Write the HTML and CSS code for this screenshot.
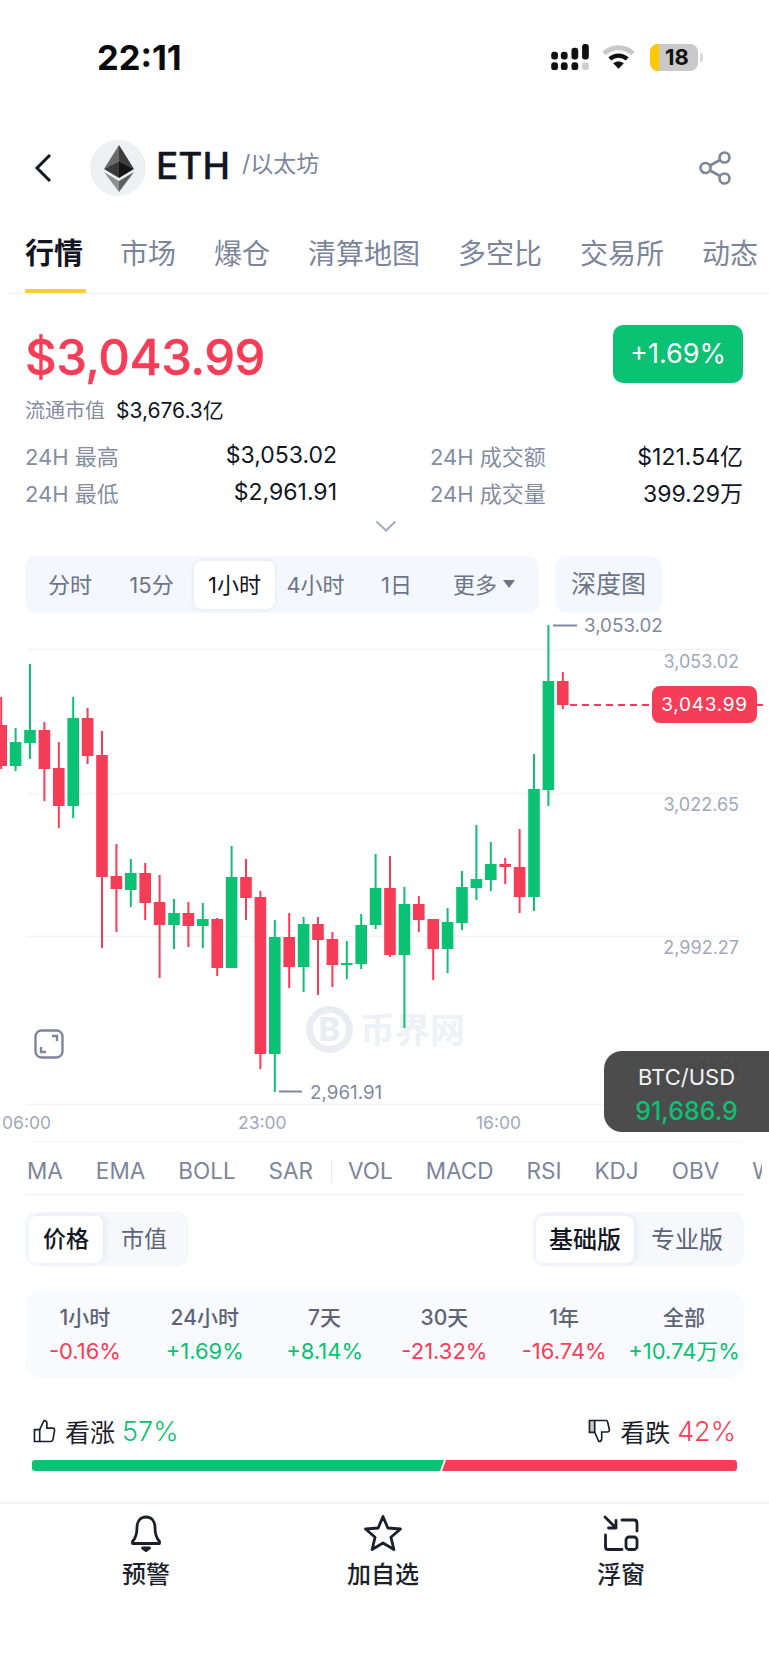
FILE: index.html
```html
<!DOCTYPE html>
<html lang="zh">
<head>
    <meta charset="UTF-8">
    <title>ETH 行情</title>
    <link rel="stylesheet" href="styles.css">
</head>
<body>
    <div class="status">
        <span class="clock">22:11</span>
        <div class="status-icons">
            <svg class="signal" viewBox="0 0 40 28">
                <rect x="0" y="8" width="7" height="8" rx="3"/>
                <rect x="10" y="8" width="7" height="8" rx="3"/>
                <rect x="21" y="4" width="7" height="12" rx="3"/>
                <rect x="32" y="0" width="7" height="16" rx="3"/>
                <rect x="0" y="19" width="7" height="8" rx="3"/>
                <rect x="10" y="19" width="7" height="8" rx="3"/>
                <rect x="21" y="19" width="7" height="8" rx="3"/>
                <rect class="off" x="32" y="19" width="7" height="8" rx="3"/>
            </svg>
            <svg class="wifi" viewBox="0 0 34 24">
                <path d="M2 8.5C10.500 .5 23.500 .5 32 8.500" fill="none" stroke="#c9c9c9" stroke-width="5"/>
                <path d="M8 14c5.400-4.600 12.600-4.600 18 0" fill="none" stroke="#111" stroke-width="4.500"/>
                <path d="M11.500 18.500c3.400-2.400 7.600-2.400 11 0L17 24Z" fill="#111"/>
            </svg>
            <div class="battery"><span class="battery-low"></span><span class="battery-num">18</span></div>
            <span class="battery-nub"></span>
        </div>
    </div>

    <div class="head">
        <svg class="back" viewBox="0 0 18 30"><path d="M16 2 3 15l13 13" fill="none" stroke="#12161f" stroke-width="3"/></svg>
        <svg class="logo" viewBox="0 0 56 56">
            <circle cx="28" cy="28" r="28" fill="#eef0f1"/>
            <polygon points="29,5 14,29 29,21" fill="#6a6a6a"/>
            <polygon points="29,5 44,29 29,21" fill="#3d3d3d"/>
            <polygon points="14,29 29,21 29,38" fill="#3a3a3a"/>
            <polygon points="44,29 29,21 29,38" fill="#151515"/>
            <polygon points="14,32 29,41 29,52" fill="#8f8f8f"/>
            <polygon points="44,32 29,41 29,52" fill="#5f5f5f"/>
        </svg>
        <span class="coin">ETH</span>
        <span class="coin-name">/以太坊</span>
        <svg class="share" viewBox="0 0 32 34" fill="none" stroke="#7d8699" stroke-width="2.600">
            <circle cx="25.500" cy="6.500" r="5"/>
            <circle cx="6.500" cy="17" r="5"/>
            <circle cx="25.500" cy="27.500" r="5"/>
            <path d="m11 14.500 10-5.500M11 19.500l10 5.500"/>
        </svg>
    </div>

    <div class="tabs">
        <a class="tab active">行情</a>
        <a class="tab">市场</a>
        <a class="tab">爆仓</a>
        <a class="tab">清算地图</a>
        <a class="tab">多空比</a>
        <a class="tab">交易所</a>
        <a class="tab">动态</a>
    </div>

    <div class="summary">
        <div class="price-row">
            <span class="price">$3,043.99</span>
            <span class="change">+1.69%</span>
        </div>
        <div class="cap"><span class="cap-label">流通市值</span><span class="cap-value">$3,676.3亿</span></div>
        <div class="stats">
            <div class="stat"><span>24H 最高</span><b>$3,053.02</b></div>
            <div class="stat"><span>24H 成交额</span><b>$121.54亿</b></div>
            <div class="stat"><span>24H 最低</span><b>$2,961.91</b></div>
            <div class="stat"><span>24H 成交量</span><b>399.29万</b></div>
        </div>
        <svg class="more" viewBox="0 0 22 12"><path d="m1.500 1.500 9.500 9 9.500-9" fill="none" stroke="#a5adbc" stroke-width="2"/></svg>
        <div class="toolbar">
            <div class="periods">
                <a class="period p1">分时</a>
                <a class="period p2">15分</a>
                <a class="period p3 on">1小时</a>
                <a class="period p4">4小时</a>
                <a class="period p5">1日</a>
                <a class="period p6">更多<i class="caret"></i></a>
            </div>
            <a class="depth">深度图</a>
        </div>
    </div>

    <div class="chart">
        <svg id="kline" class="kline" viewBox="0 613 769 530">
            <g class="grid">
                <line x1="27" x2="739" y1="649.500" y2="649.500"/>
                <line x1="27" x2="739" y1="793.500" y2="793.500"/>
                <line x1="27" x2="739" y1="936.500" y2="936.500"/>
                <line x1="27" x2="739" y1="1104.500" y2="1104.500"/>
                <line x1="27" x2="742" y1="1142" y2="1142"/>
            </g>
            <g class="mark">
                <circle cx="329.500" cy="1029.500" r="20" fill="none" stroke="#e9edf2" stroke-width="7"/>
                <text class="mark-b" x="329.500" y="1041">B</text>
                <text class="mark-text" x="360" y="1043">币界网</text>
            </g>
            <g class="axis">
                <text x="739" y="668">3,053.02</text>
                <text x="739" y="811">3,022.65</text>
                <text x="739" y="954">2,992.27</text>
                <text x="739" y="1076">2,961.91</text>
            </g>
            <g class="times">
                <text x="2" y="1129">06:00</text>
                <text x="238" y="1129">23:00</text>
                <text x="476" y="1129">16:00</text>
            </g>
            <g class="extreme">
                <line x1="553" x2="577" y1="625.500" y2="625.500"/>
                <text x="584" y="632">3,053.02</text>
                <line x1="279" x2="302" y1="1091.500" y2="1091.500"/>
                <text x="310" y="1099">2,961.91</text>
            </g>
            <line class="last" x1="570" x2="652" y1="705" y2="705"/>
            <line class="last" x1="757" x2="763" y1="705" y2="705"/>
        </svg>
        <span class="last-tag">3,043.99</span>
        <svg class="expand" viewBox="0 0 30 30" fill="none" stroke="#7c859c" stroke-width="2.400">
            <rect x="1.500" y="1.500" width="27" height="27" rx="6"/>
            <path d="M18 7h5v5M7 18v5h5"/>
        </svg>
        <div class="float-quote">
            <span class="float-pair">BTC/USD</span>
            <span class="float-num">91,686.9</span>
        </div>
    </div>

    <div class="indicators">
        <a>MA</a><a>EMA</a><a>BOLL</a><a class="sep">SAR</a><a>VOL</a><a>MACD</a><a>RSI</a><a>KDJ</a><a>OBV</a><a>WR</a>
    </div>
    <div class="rule"></div>

    <div class="switches">
        <div class="switch">
            <a class="sw sw-price on">价格</a>
            <a class="sw sw-cap">市值</a>
        </div>
        <div class="switch">
            <a class="sw sw-basic on">基础版</a>
            <a class="sw sw-pro">专业版</a>
        </div>
    </div>

    <div class="returns">
        <div class="ret"><span>1小时</span><b class="down">-0.16%</b></div>
        <div class="ret"><span>24小时</span><b class="up">+1.69%</b></div>
        <div class="ret"><span>7天</span><b class="up">+8.14%</b></div>
        <div class="ret"><span>30天</span><b class="down">-21.32%</b></div>
        <div class="ret"><span>1年</span><b class="down">-16.74%</b></div>
        <div class="ret"><span>全部</span><b class="up">+10.74万%</b></div>
    </div>

    <div class="vote">
        <div class="vote-side">
            <svg class="thumb" viewBox="0 0 24 24" fill="none" stroke="#1c1f2b" stroke-width="1.700">
                <path d="M7 10.500V23H1.500V10.500Z"/>
                <path d="M7 10.500 11.500 1c1.800 0 3 1.200 3 3v5h6c1.300 0 2.200 1 2 2.300l-1.700 9.800c-.2 1.100-1 1.900-2.100 1.900H7"/>
            </svg>
            <span class="vote-label">看涨</span><span class="vote-num up">57%</span>
        </div>
        <div class="vote-side">
            <svg class="thumb" viewBox="0 0 24 24" fill="none" stroke="#1c1f2b" stroke-width="1.700">
                <path d="M7 13.500V1H1.500v12.500Z" fill="#1c1f2b" fill-opacity=".25"/>
                <path d="M7 1h11.500c1.100 0 1.900.8 2.100 1.900l1.700 7.800c.2 1.300-.7 2.300-2 2.300h-6v7c0 1.800-1.200 3-3 3L7 13.500"/>
            </svg>
            <span class="vote-label">看跌</span><span class="vote-num down">42%</span>
        </div>
    </div>
    <div class="vote-bar">
        <div class="bar-up"></div>
        <div class="bar-down"></div>
    </div>

    <div class="nav">
        <a class="nav-item">
            <svg class="nav-icon" viewBox="0 0 38 38" fill="none" stroke="#1c1f2b" stroke-width="2.800" stroke-linejoin="round">
                <path d="M19 3c-6 0-9 4.500-9 10.500 0 6-.8 10-4.500 14v2h27v-2c-3.700-4-4.500-8-4.500-14C28 7.500 25 3 19 3Z"/>
                <path d="M15.500 34h7L19 36.500Z" fill="#1c1f2b"/>
            </svg>
            预警
        </a>
        <a class="nav-item">
            <svg class="nav-icon" viewBox="0 0 38 38" fill="none" stroke="#1c1f2b" stroke-width="2.800" stroke-linejoin="round">
                <path d="M19 2.500 23.800 14l12.700 1-9.600 8.200 3 12.300L19 29l-10.900 6.500 3-12.300L1.500 15l12.700-1Z"/>
            </svg>
            加自选
        </a>
        <a class="nav-item">
            <svg class="nav-icon" viewBox="0 0 38 38" fill="none" stroke="#1c1f2b" stroke-width="2.800" stroke-linecap="round" stroke-linejoin="round">
                <path d="m3 3 11 11M14 6.500V14H6.500"/>
                <path d="M20 6h12c2 0 3 1 3 3v8"/>
                <path d="M3.500 21v12c0 1.500 1 2.500 2.500 2.500h14"/>
                <rect x="24" y="23" width="11" height="12.500" rx="3"/>
            </svg>
            浮窗
        </a>
    </div>

    <script src="chart.js"></script>
</body>
</html>
```

FILE: styles.css
```css
*{box-sizing:border-box;}
html,body{margin:0;padding:0;}
body{width:769px;height:1665px;overflow:hidden;background:#fff;color:#12161f;font-family:Inter,"Noto Sans CJK SC",sans-serif;}
a{display:block;}
svg{display:block;flex:none;}
.up{color:#0ac174;}
.down{color:#f63d58;}

/* status bar */
.status{display:flex;align-items:center;justify-content:space-between;height:114px;padding:0 66px 0 97px;}
.clock{font-size:34.500px;font-weight:700;color:#0a0a0a;}
.status-icons{display:flex;align-items:center;}
.signal{width:39px;height:27px;margin-right:12px;fill:#111;}
.signal .off{fill:#cfcfcf;}
.wifi{width:33px;height:24px;margin-right:15px;}
.battery{position:relative;display:flex;align-items:center;justify-content:center;width:48px;height:27px;padding-left:6px;border-radius:8px;background:#c9c9c9;overflow:hidden;}
.battery-low{position:absolute;left:0;top:0;bottom:0;width:9px;background:#ffc800;}
.battery-num{position:relative;font-size:22px;font-weight:700;color:#111;}
.battery-nub{width:3px;height:9px;margin-left:2px;border-radius:0 3px 3px 0;background:#d8d8d8;}

/* coin header */
.head{display:flex;align-items:center;height:108px;padding-left:34px;}
.back{width:18px;height:30px;margin-right:38px;}
.logo{width:56px;height:56px;margin-right:10px;margin-top:-1px;}
.coin{font-size:37px;font-weight:500;margin-right:12px;margin-top:-6px;-webkit-text-stroke:.3px #12161f;}
.coin-name{font-size:23px;color:#7c859b;margin-top:-12px;}
.share{width:32px;height:34px;margin-left:auto;margin-right:38px;}

/* tabs */
.tabs{display:flex;gap:38px;height:72px;margin-left:9px;padding-left:16px;border-bottom:1px solid #eff0f3;overflow:hidden;}
.tab{flex:none;height:71px;padding-top:13px;font-size:28px;line-height:38px;color:#7c859c;white-space:nowrap;}
.tab.active{width:61px;margin-right:-4px;font-size:29px;font-weight:700;color:#12161f;border-bottom:4px solid #ffd02b;}

/* price block */
.summary{padding:31px 25px 0;}
.price-row{display:flex;justify-content:space-between;height:58px;margin-right:1px;}
.price{font-size:49px;line-height:66px;font-weight:500;color:#f63d58;letter-spacing:-.5px;-webkit-text-stroke:.4px #f63d58;}
.change{width:130px;height:58px;border-radius:10px;background:#0ac174;color:#fff;font-size:27px;line-height:58px;text-align:center;}
.cap{display:flex;align-items:center;gap:11px;height:28px;margin-top:12px;}
.cap-label{font-size:20px;color:#858da1;}
.cap-value{font-size:21px;color:#12161f;}
.stats{display:grid;grid-template-columns:312px 313px;column-gap:93px;grid-auto-rows:37px;margin-top:13px;margin-right:-1px;}
.stat{display:flex;align-items:center;justify-content:space-between;font-size:22px;}
.stat span{color:#858da1;}
.stat b{font-size:23px;font-weight:400;color:#12161f;}
.more{width:22px;height:12px;margin:10px 0 0 350px;}
.toolbar{display:flex;gap:16px;height:57px;margin-top:24px;}
.periods{position:relative;display:flex;align-items:center;width:514px;border-radius:12px;background:#f4f7fb;font-size:22px;color:#6d7589;}
.period{flex:none;text-align:center;line-height:48px;height:48px;white-space:nowrap;}
.p1{width:90px;}
.p2{width:73px;}
.p3{width:81px;margin-left:6px;}
.p4{width:81px;}
.p5{width:81px;}
.p6{width:90px;margin-left:2px;}
.period.on{border-radius:8px;background:#fff;color:#12161f;box-shadow:0 0 4px rgba(120,135,165,.16);}
.caret{display:inline-block;width:0;height:0;margin-left:6px;vertical-align:5px;border:6px solid transparent;border-top:8px solid #6d7589;border-bottom:0;}
.depth{width:107px;border-radius:12px;background:#f4f7fb;font-size:25px;line-height:57px;text-align:center;color:#6d7589;}

/* chart canvas */
.chart{position:relative;height:529px;overflow:hidden;}
.kline{position:absolute;left:0;top:0;width:769px;height:530px;}
.grid line{stroke:#f2f4f7;stroke-width:1.500;}
.axis text{font-size:18px;fill:#a1a9bb;text-anchor:end;}
.times text{font-size:17.500px;fill:#a1a9bb;}
.extreme text{font-size:18.800px;fill:#7f889c;}
.extreme line{stroke:#7f889c;stroke-width:2;}
.last{stroke:#f63d58;stroke-width:2;stroke-dasharray:7 5;}
.mark-b{font-size:32px;font-weight:800;fill:#e9edf2;text-anchor:middle;}
.mark-text{font-size:35px;font-weight:700;fill:#eef1f5;}
.last-tag{position:absolute;left:652px;top:73px;width:105px;height:37px;border-radius:8px;background:#f63d58;color:#fff;font-size:19px;line-height:37px;letter-spacing:.7px;text-align:center;}
.expand{position:absolute;left:34px;top:416px;width:30px;height:30px;}
.float-quote{position:absolute;left:604px;top:438px;display:flex;flex-direction:column;align-items:center;width:165px;height:81px;padding-top:12px;border-radius:18px 0 0 18px;background:rgba(66,66,66,.95);}
.float-pair{font-size:22px;line-height:28px;color:#f2f2f2;}
.float-num{margin-top:4px;font-size:25px;line-height:32px;font-weight:500;color:#0ac174;}

/* indicators */
.indicators{display:flex;align-items:center;gap:33px;width:735px;height:52px;margin-left:27px;padding-top:4px;overflow:hidden;font-size:22.500px;color:#7c859c;white-space:nowrap;}
.indicators a{flex:none;}
.indicators .sep{position:relative;margin-right:2px;}
.indicators .sep::after{content:"";position:absolute;right:-19px;top:3px;bottom:1px;width:1px;background:#e8eaef;}
.rule{width:719px;height:1px;margin-left:25px;background:#eff1f4;}

/* price / version switches */
.switches{display:flex;justify-content:space-between;margin:17px 25px 0;}
.switch{display:flex;align-items:center;height:54px;padding:0 4px;border-radius:12px;background:#f6f8fc;font-size:23px;color:#5d6478;}
.sw{height:47px;line-height:47px;text-align:center;}
.sw.on{border-radius:8px;background:#fff;color:#12161f;font-weight:500;box-shadow:2px 0 6px rgba(120,135,165,.14);}
.sw-price{width:74px;}
.sw-cap{width:82px;}
.sw-basic{width:98px;font-size:24px;}
.sw-pro{width:106px;font-size:24px;}

/* returns */
.returns{display:flex;height:87px;margin:25px 25px 0;padding-top:13px;border-radius:16px;background:#f8fafd;}
.ret{display:flex;flex-direction:column;align-items:center;width:120px;white-space:nowrap;}
.ret span{font-size:21px;line-height:28px;font-weight:500;color:#5d6478;}
.ret b{margin-top:5px;font-size:22px;line-height:28px;font-weight:400;}

/* sentiment */
.vote{display:flex;justify-content:space-between;align-items:center;height:32px;margin:37px 33px 0;}
.vote-side{display:flex;align-items:center;}
.thumb{width:23px;height:24px;margin-right:9px;}
.vote-label{font-size:25px;color:#1c1f2b;margin-right:7px;}
.vote-num{font-size:27px;font-weight:300;}
.vote-bar{display:flex;gap:1px;height:11px;margin:13px 32px 0;}
.bar-up{width:412px;border-radius:3px 0 0 3px;background:#0ac174;clip-path:polygon(0 0,100% 0,calc(100% - 4px) 100%,0 100%);}
.bar-down{flex:1;margin-left:-3px;border-radius:0 3px 3px 0;background:#f63d58;clip-path:polygon(4px 0,100% 0,100% 100%,0 100%);}

/* bottom nav */
.nav{position:relative;display:flex;height:162px;margin-top:31px;border-top:2px solid #f5f5f8;}
.nav-item{position:absolute;top:10px;display:flex;flex-direction:column;align-items:center;transform:translateX(-50%);font-size:24px;line-height:32px;font-weight:500;color:#1c1f2b;white-space:nowrap;}
.nav-item:nth-child(1){left:146px;}
.nav-item:nth-child(2){left:383px;}
.nav-item:nth-child(3){left:621px;}
.nav-icon{width:38px;height:38px;margin-bottom:7px;}
```

FILE: chart.js
```js
// 每根K线: 最高, 开/收上沿, 开/收下沿, 最低, 颜色
var bars = [
    [697,725,766,769,'r'],[728,742,766,771,'g'],[664,730,743,759,'g'],[722,730,769,801,'r'],
    [742,768,806,828,'r'],[697,718,806,818,'g'],[708,718,756,764,'r'],[731,755,877,948,'r'],
    [844,876,889,932,'r'],[859,873,890,907,'g'],[863,873,903,920,'r'],[875,902,925,978,'r'],
    [899,913,925,949,'g'],[902,913,926,947,'r'],[903,919,926,948,'g'],[918,919,968,976,'r'],
    [846,877,968,968,'g'],[859,877,898,920,'r'],[891,897,1054,1069,'r'],[920,937,1054,1092,'g'],
    [913,937,967,988,'r'],[917,924,967,992,'g'],[917,924,940,995,'r'],[932,939,965,987,'r'],
    [941,963,965,979,'g'],[914,925,964,969,'g'],[854,888,925,929,'g'],[856,888,955,957,'r'],
    [887,904,955,1028,'g'],[896,904,920,932,'r'],[919,919,949,980,'r'],[908,922,949,973,'g'],
    [871,887,923,930,'g'],[825,879,888,900,'g'],[842,864,880,891,'g'],[858,864,867,884,'r'],
    [829,867,897,913,'r'],[754,789,897,911,'g'],[625,681,790,806,'g'],[672,681,705,709,'r']
];

var svg = document.getElementById('kline');
var last = svg.querySelector('.last');

function addRect(x, y, w, h, color) {
    var r = document.createElementNS('http://www.w3.org/2000/svg', 'rect');
    r.setAttribute('x', x);
    r.setAttribute('y', y);
    r.setAttribute('width', w);
    r.setAttribute('height', h);
    r.setAttribute('fill', color);
    svg.insertBefore(r, last);
}

for (var i = 0; i < bars.length; i++) {
    var b = bars[i];
    var cx = 1.2 + 14.4 * i;
    var color = b[4] == 'g' ? '#0ac174' : '#f63d58';
    addRect(cx - 1, b[0], 2, b[3] - b[0], color);
    addRect(cx - 5.8, b[1], 11.6, Math.max(b[2] - b[1], 2), color);
}
```
